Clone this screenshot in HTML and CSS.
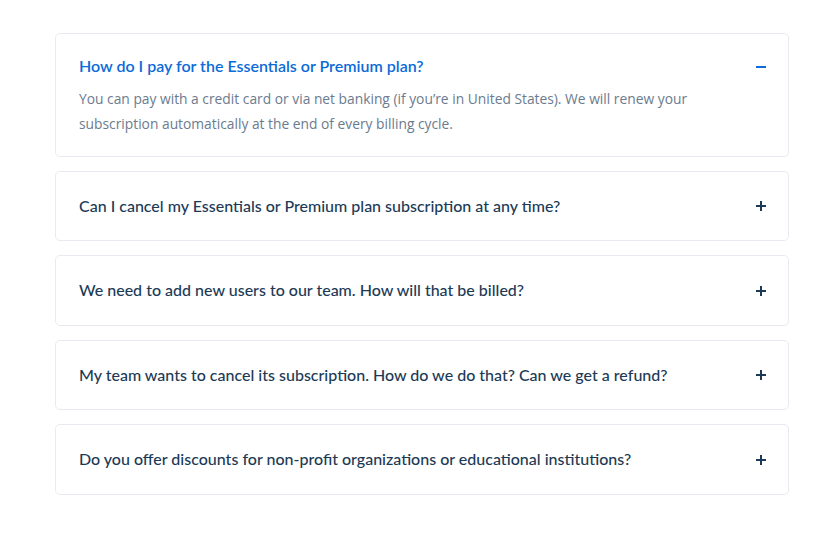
FILE: index.html
```html
<!DOCTYPE html>
<html>
<head>
<meta charset="utf-8">
<link rel="stylesheet" href="styles.css">
</head>
<body>
<div class="faq">
  <div class="item open">
    <div class="q">
      <span class="qt">How do I pay for the Essentials or Premium plan?</span>
      <svg class="icon" width="10" height="10" viewBox="0 0 10 10"><path d="M0 5h10" stroke="#0b6bd8" stroke-width="2"/></svg>
    </div>
    <p class="a">You can pay with a credit card or via net banking (if you’re in United States). We will renew your subscription automatically at the end of every billing cycle.</p>
  </div>
  <div class="item">
    <div class="q">
      <span class="qt">Can I cancel my Essentials or Premium plan subscription at any time?</span>
      <svg class="icon" width="10" height="10" viewBox="0 0 10 10"><path d="M0 5h10M5 0v10" stroke="#1c3a56" stroke-width="2"/></svg>
    </div>
  </div>
  <div class="item">
    <div class="q">
      <span class="qt">We need to add new users to our team. How will that be billed?</span>
      <svg class="icon" width="10" height="10" viewBox="0 0 10 10"><path d="M0 5h10M5 0v10" stroke="#1c3a56" stroke-width="2"/></svg>
    </div>
  </div>
  <div class="item">
    <div class="q">
      <span class="qt">My team wants to cancel its subscription. How do we do that? Can we get a refund?</span>
      <svg class="icon" width="10" height="10" viewBox="0 0 10 10"><path d="M0 5h10M5 0v10" stroke="#1c3a56" stroke-width="2"/></svg>
    </div>
  </div>
  <div class="item">
    <div class="q">
      <span class="qt">Do you offer discounts for non-profit organizations or educational institutions?</span>
      <svg class="icon" width="10" height="10" viewBox="0 0 10 10"><path d="M0 5h10M5 0v10" stroke="#1c3a56" stroke-width="2"/></svg>
    </div>
  </div>
</div>
</body>
</html>
```
FILE: styles.css
```css
html, body {
  margin: 0;
  background: #ffffff;
}
body {
  padding: 33px 37px 0 55px;
}
.faq {
  display: flex;
  flex-direction: column;
  gap: 14px;
}
.item {
  border: 1px solid #e7ebf1;
  border-radius: 5px;
  padding: 23px 22px 23.5px 23px;
}
.item.open {
  padding: 21px 22px 19.5px 23px;
}
.q {
  display: flex;
  align-items: center;
  justify-content: space-between;
  height: 22px;
}
.qt {
  font-family: Lato, "Noto Sans", sans-serif;
  font-size: 16px;
  font-weight: 500;
  color: #1c3a56;
  line-height: 22px;
}
.open .qt {
  color: #0b6bd8;
  font-weight: 600;
}
.icon {
  flex: none;
  margin-top: 1px;
}
.a {
  margin: 9px 0 0;
  font-family: "Open Sans", sans-serif;
  font-size: 13.8px;
  line-height: 25px;
  color: #6b7b8e;
  max-width: 640px;
}
```
